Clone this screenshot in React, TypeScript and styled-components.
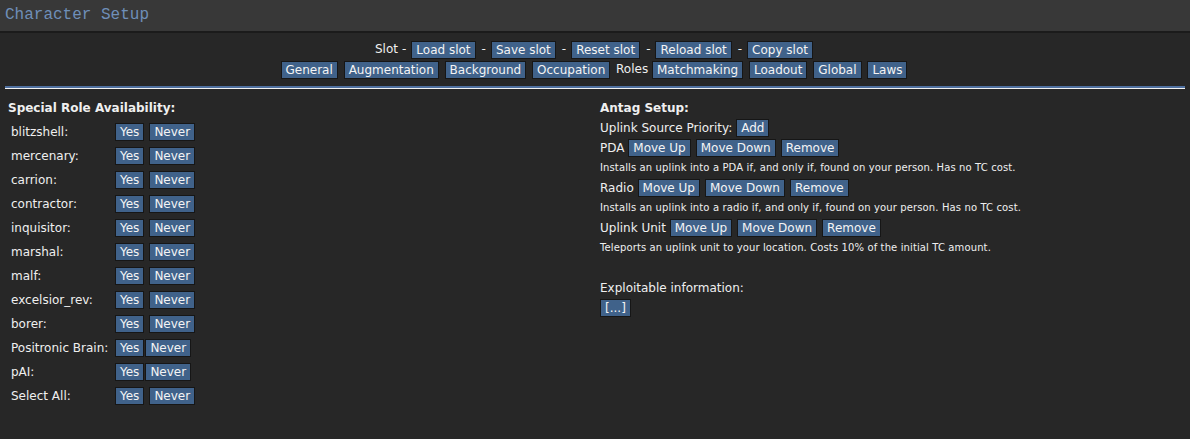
import React from "react";
import styled, { createGlobalStyle } from "styled-components";

const Global = createGlobalStyle`
  html, body { margin: 0; padding: 0; background: #272727; }
  body {
    font-family: "DejaVu Sans", "Liberation Sans", sans-serif;
    font-size: 12px;
    color: #efefef;
    width: 1190px;
    height: 439px;
    overflow: hidden;
  }
`;

const TitleBar = styled.div`
  height: 31px;
  line-height: 30px;
  background: #383838;
  border-bottom: 2px solid #1b1b1b;
  padding-left: 5px;
  font-family: "Liberation Mono", monospace;
  font-size: 16px;
  color: #6f8fb8;
`;

const Body = styled.div`
  padding: 6px 5px 0 5px;
`;

const NavLine = styled.div`
  text-align: center;
  line-height: 20px;
  height: 20px;
  white-space: pre;
`;

const Btn = styled.span<{ $mr?: number }>`
  display: inline-block;
  background: #40628a;
  color: #f4f4f4;
  border: 1px solid #161616;
  padding: 0 4px;
  line-height: 16px;
  height: 16px;
  margin-right: ${(p) => (p.$mr ?? 2)}px;
  vertical-align: middle;
  white-space: nowrap;
`;

const Sep = styled.span`
  display: inline-block;
  padding: 0 5px 0 4px;
`;

const Rule = styled.div`
  margin-top: 7px;
  height: 2px;
  background: #4f70a0;
  border-bottom: 1px solid #f2f2f2;
`;

const Columns = styled.div`
  display: grid;
  grid-template-columns: 592px 1fr;
  padding-left: 3px;
  margin-top: 9px;
`;

const Heading = styled.div`
  font-weight: bold;
  line-height: 20px;
  height: 20px;
`;

const RoleTable = styled.div`
  margin-top: 2px;
  display: grid;
  grid-template-columns: 104px auto;
  justify-content: start;
  padding-left: 3px;
`;

const RoleLabel = styled.div`
  height: 24px;
  line-height: 24px;
  white-space: nowrap;
`;

const RoleCell = styled.div`
  height: 24px;
  display: flex;
  align-items: center;
`;

const Line = styled.div`
  height: 20px;
  display: flex;
  align-items: center;
  white-space: pre;
`;

const Small = styled.div`
  height: 20px;
  line-height: 20px;
  font-size: 10px;
  letter-spacing: 0.12px;
`;

const roles: [string, number][] = [
  ["blitzshell:", 5],
  ["mercenary:", 5],
  ["carrion:", 5],
  ["contractor:", 5],
  ["inquisitor:", 5],
  ["marshal:", 5],
  ["malf:", 5],
  ["excelsior_rev:", 5],
  ["borer:", 5],
  ["Positronic Brain:", 1],
  ["pAI:", 1],
  ["Select All:", 5],
];

const uplinks: [string, string][] = [
  ["PDA", "Installs an uplink into a PDA if, and only if, found on your person. Has no TC cost."],
  ["Radio", "Installs an uplink into a radio if, and only if, found on your person. Has no TC cost."],
  ["Uplink Unit", "Teleports an uplink unit to your location. Costs 10% of the initial TC amount."],
];

export default function App() {
  return (
    <>
      <Global />
      <TitleBar>Character Setup</TitleBar>
      <Body>
        <NavLine>
          {"Slot"}
          <Sep>-</Sep>
          <Btn>Load slot</Btn>
          <Sep>-</Sep>
          <Btn>Save slot</Btn>
          <Sep>-</Sep>
          <Btn>Reset slot</Btn>
          <Sep>-</Sep>
          <Btn>Reload slot</Btn>
          <Sep>-</Sep>
          <Btn>Copy slot</Btn>
        </NavLine>
        <NavLine>
          <Btn>General</Btn> <Btn>Augmentation</Btn> <Btn>Background</Btn>{" "}
          <Btn>Occupation</Btn>
          {" Roles "}
          <Btn>Matchmaking</Btn> <Btn>Loadout</Btn> <Btn>Global</Btn> <Btn>Laws</Btn>
        </NavLine>
        <Rule />
        <Columns>
          <div>
            <Heading>Special Role Availability:</Heading>
            <RoleTable>
              {roles.map(([name, gap]) => (
                <React.Fragment key={name}>
                  <RoleLabel>{name}</RoleLabel>
                  <RoleCell>
                    <Btn $mr={gap}>Yes</Btn>
                    <Btn>Never</Btn>
                  </RoleCell>
                </React.Fragment>
              ))}
            </RoleTable>
          </div>
          <div>
            <Heading>Antag Setup:</Heading>
            <Line>
              {"Uplink Source Priority: "}
              <Btn>Add</Btn>
            </Line>
            {uplinks.map(([n, d]) => (
              <React.Fragment key={n}>
                <Line>
                  {n + " "}
                  <Btn $mr={5}>Move Up</Btn>
                  <Btn $mr={5}>Move Down</Btn>
                  <Btn>Remove</Btn>
                </Line>
                <Small>{d}</Small>
              </React.Fragment>
            ))}
            <Line />
            <Line>Exploitable information:</Line>
            <Line>
              <Btn>[...]</Btn>
            </Line>
          </div>
        </Columns>
      </Body>
    </>
  );
}
